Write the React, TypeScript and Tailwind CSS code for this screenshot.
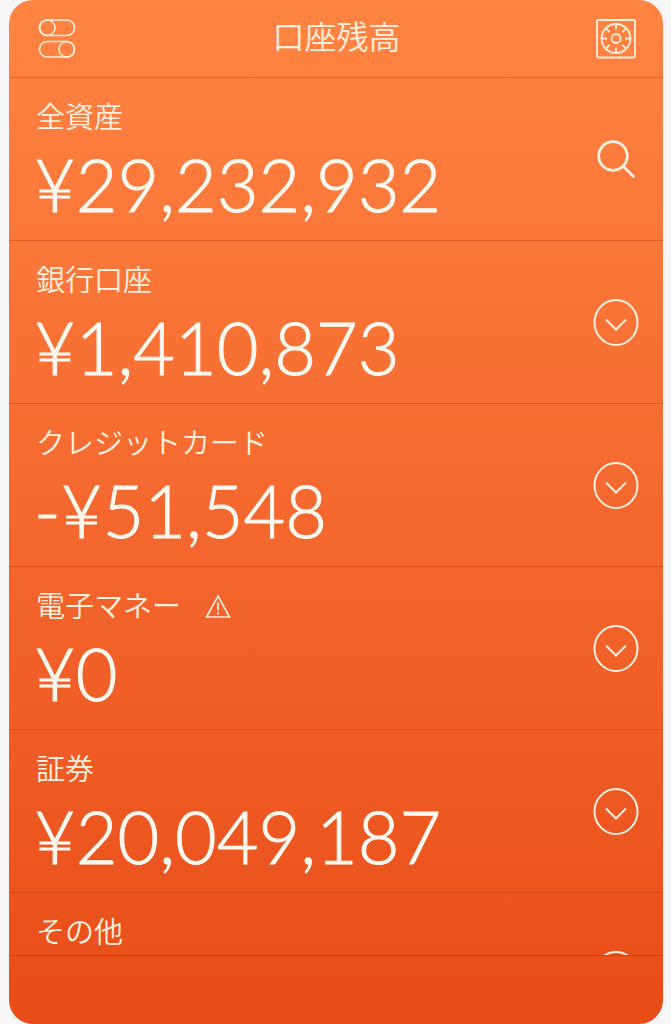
const accounts = [
  { label: "全資産", amount: "¥29,232,932", action: "search" },
  { label: "銀行口座", amount: "¥1,410,873", action: "expand" },
  { label: "クレジットカード", amount: "-¥51,548", action: "expand" },
  { label: "電子マネー", amount: "¥0", action: "expand", warning: true },
  { label: "証券", amount: "¥20,049,187", action: "expand" },
  { label: "その他", amount: "", action: "expand" },
];

const ticks = [0, 45, 90, 135, 180, 225, 270, 315];

function TogglesIcon() {
  return (
    <svg width="40" height="40" viewBox="0 0 40 40" fill="none" stroke="currentColor" strokeWidth="1.6">
      <rect x="2.5" y="1" width="35" height="15.5" rx="7.75" />
      <circle cx="10.25" cy="8.75" r="7.75" />
      <rect x="2.5" y="22.5" width="35" height="15.5" rx="7.75" />
      <circle cx="29.75" cy="30.25" r="7.75" />
    </svg>
  );
}

function SafeIcon() {
  return (
    <svg width="40" height="40" viewBox="0 0 40 40" fill="none" stroke="currentColor" strokeWidth="1.8">
      <rect x="1" y="1" width="38" height="37.5" rx="1.5" />
      <circle cx="20" cy="19.5" r="14.5" />
      <circle cx="20" cy="19.5" r="4.5" />
      {ticks.map((angle) => (
        <path key={angle} d="M20 5.5v5" transform={`rotate(${angle} 20 19.5)`} />
      ))}
    </svg>
  );
}

function SearchIcon() {
  return (
    <svg width="46" height="46" viewBox="0 0 46 46" fill="none" stroke="currentColor" strokeWidth="2.8">
      <circle cx="20" cy="20" r="14.3" />
      <path d="M30 30l10.5 10.5" strokeLinecap="round" />
    </svg>
  );
}

function ExpandIcon() {
  return (
    <svg width="46" height="48" viewBox="0 0 46 48" fill="none" stroke="currentColor" strokeWidth="2">
      <ellipse cx="23" cy="24.5" rx="21.5" ry="22.5" />
      <path d="M13 21.5l10 10 10-10" />
    </svg>
  );
}

function WarningIcon() {
  return (
    <svg width="26" height="28" viewBox="0 0 26 28" fill="none" stroke="currentColor" strokeWidth="1.6" role="img" aria-label="警告">
      <path d="M13 6L24.5 27H1.5z" />
      <path d="M13 12.5v8M13 22.5v2" strokeWidth="1.8" />
    </svg>
  );
}

export default function App() {
  return (
    <div className="h-screen bg-[#f6f6f6] pl-[9px] pr-2 font-['Noto_Sans_CJK_JP',sans-serif] font-[350] text-[#fff0de]">
      <main className="flex h-full flex-col overflow-hidden rounded-[24px] bg-linear-to-b from-[#ff8442] via-[#f4682f] to-[#e84c18]">
        <header className="flex h-[78px] shrink-0 items-center justify-between border-b border-[#e0642c] pl-7 pr-[27px]">
          <button type="button" aria-label="表示設定">
            <TogglesIcon />
          </button>
          <h1 className="pb-2 text-[32px] leading-10">口座残高</h1>
          <button type="button" aria-label="金庫">
            <SafeIcon />
          </button>
        </header>

        <ul className="min-h-0 flex-1 overflow-hidden border-b border-[#cf4316]">
          {accounts.map((account) => (
            <li
              key={account.label}
              className="flex h-[163px] items-center justify-between border-b border-[#b4380c]/40 pl-[27px] pr-6"
            >
              <div className="h-full pt-[21px]">
                <h2 className="flex items-center gap-6 text-[29px] leading-8">
                  {account.label}
                  {account.warning && <WarningIcon />}
                </h2>
                <p className="-ml-0.5 mt-[13px] font-['Lato',sans-serif] text-[72px] leading-20 font-light text-[#fff8ee] [-webkit-text-stroke:1px_#fff8ee]">
                  {account.amount}
                </p>
              </div>
              <button type="button" aria-label={account.action === "search" ? "検索" : `${account.label}を開く`}>
                {account.action === "search" ? <SearchIcon /> : <ExpandIcon />}
              </button>
            </li>
          ))}
        </ul>

        <footer className="h-[68px] shrink-0" />
      </main>
    </div>
  );
}
